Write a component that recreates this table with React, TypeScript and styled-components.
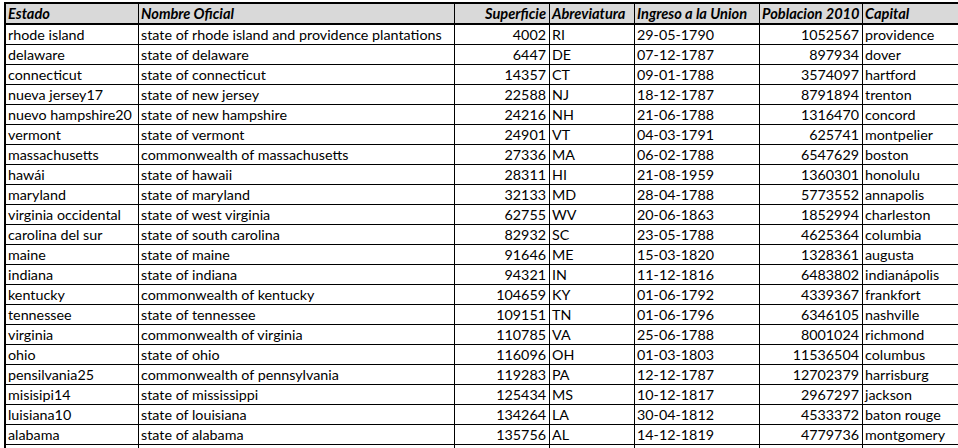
import React from 'react';
import styled, { createGlobalStyle } from 'styled-components';

const GlobalStyle = createGlobalStyle`
  html, body {
    margin: 0;
    padding: 0;
    background: #ffffff;
    overflow: hidden;
  }
  body {
    width: 958px;
    height: 448px;
  }
`;

const COLS = '133px 316px 95px 85px 125px 103px 130px';

const Page = styled.div`
  height: 448px;
  overflow: hidden;
  padding: 2px 0 0 4px;
  box-sizing: border-box;
  font-family: 'Lato', 'Liberation Sans', sans-serif;
  font-size: 14.3px;
  color: #000;
`;

const Sheet = styled.div`
  border-top: 2px solid #000;
  border-left: 2px solid #000;
  width: max-content;
`;

const HeaderRow = styled.div`
  display: grid;
  grid-template-columns: ${COLS};
  height: 21px;
  box-sizing: border-box;
  background: #d9d9d9;
  border-bottom: 2px solid #000;
`;

const Row = styled.div`
  display: grid;
  grid-template-columns: ${COLS};
  height: 20px;
  box-sizing: border-box;
  border-bottom: 1px solid #000;
`;

const HeadCell = styled.div<{ $right?: boolean }>`
  box-sizing: border-box;
  border-right: 1px solid #000;
  padding: 0 3px 0 2px;
  font-size: 14.6px;
  font-weight: 700;
  font-style: italic;
  line-height: 19px;
  white-space: nowrap;
  overflow: hidden;
  text-align: ${(p) => (p.$right ? 'right' : 'left')};
  &:last-child {
    border-right: none;
  }
`;

const Cell = styled.div<{ $right?: boolean }>`
  box-sizing: border-box;
  border-right: 1px solid #000;
  padding: 0 3px 0 2px;
  line-height: 20px;
  white-space: nowrap;
  overflow: hidden;
  text-align: ${(p) => (p.$right ? 'right' : 'left')};
  &:last-child {
    border-right: none;
  }
`;

const headers = [
  { label: 'Estado' },
  { label: 'Nombre Oficial' },
  { label: 'Superficie', right: true },
  { label: 'Abreviatura' },
  { label: 'Ingreso a la Union' },
  { label: 'Poblacion 2010' },
  { label: 'Capital' },
];

const rows: string[][] = [
  ['rhode island', 'state of rhode island and providence plantations', '4002', 'RI', '29-05-1790', '1052567', 'providence'],
  ['delaware', 'state of delaware', '6447', 'DE', '07-12-1787', '897934', 'dover'],
  ['connecticut', 'state of connecticut', '14357', 'CT', '09-01-1788', '3574097', 'hartford'],
  ['nueva jersey17', 'state of new jersey', '22588', 'NJ', '18-12-1787', '8791894', 'trenton'],
  ['nuevo hampshire20', 'state of new hampshire', '24216', 'NH', '21-06-1788', '1316470', 'concord'],
  ['vermont', 'state of vermont', '24901', 'VT', '04-03-1791', '625741', 'montpelier'],
  ['massachusetts', 'commonwealth of massachusetts', '27336', 'MA', '06-02-1788', '6547629', 'boston'],
  ['hawái', 'state of hawaii', '28311', 'HI', '21-08-1959', '1360301', 'honolulu'],
  ['maryland', 'state of maryland', '32133', 'MD', '28-04-1788', '5773552', 'annapolis'],
  ['virginia occidental', 'state of west virginia', '62755', 'WV', '20-06-1863', '1852994', 'charleston'],
  ['carolina del sur', 'state of south carolina', '82932', 'SC', '23-05-1788', '4625364', 'columbia'],
  ['maine', 'state of maine', '91646', 'ME', '15-03-1820', '1328361', 'augusta'],
  ['indiana', 'state of indiana', '94321', 'IN', '11-12-1816', '6483802', 'indianápolis'],
  ['kentucky', 'commonwealth of kentucky', '104659', 'KY', '01-06-1792', '4339367', 'frankfort'],
  ['tennessee', 'state of tennessee', '109151', 'TN', '01-06-1796', '6346105', 'nashville'],
  ['virginia', 'commonwealth of virginia', '110785', 'VA', '25-06-1788', '8001024', 'richmond'],
  ['ohio', 'state of ohio', '116096', 'OH', '01-03-1803', '11536504', 'columbus'],
  ['pensilvania25', 'commonwealth of pennsylvania', '119283', 'PA', '12-12-1787', '12702379', 'harrisburg'],
  ['misisipi14', 'state of mississippi', '125434', 'MS', '10-12-1817', '2967297', 'jackson'],
  ['luisiana10', 'state of louisiana', '134264', 'LA', '30-04-1812', '4533372', 'baton rouge'],
  ['alabama', 'state of alabama', '135756', 'AL', '14-12-1819', '4779736', 'montgomery'],
  ['', '', '', '', '', '', ''],
];

const numeric = [2, 5];

export default function App() {
  return (
    <>
      <GlobalStyle />
      <Page>
        <Sheet>
          <HeaderRow>
            {headers.map((h, idx) => (
              <HeadCell key={idx} $right={h.right}>{h.label}</HeadCell>
            ))}
          </HeaderRow>
          {rows.map((r, i) => (
            <Row key={i}>
              {r.map((v, j) => (
                <Cell key={j} $right={numeric.includes(j)}>{v}</Cell>
              ))}
            </Row>
          ))}
        </Sheet>
      </Page>
    </>
  );
}
